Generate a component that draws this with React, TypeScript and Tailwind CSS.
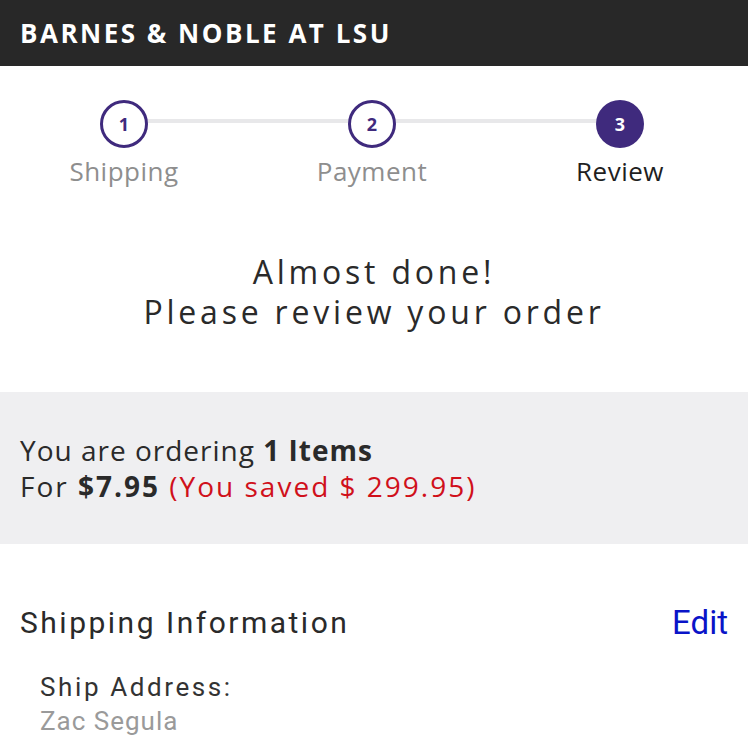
import React from 'react';

const STEPS = [
  { n: 1, label: 'Shipping', active: false },
  { n: 2, label: 'Payment', active: false },
  { n: 3, label: 'Review', active: true },
];

const SANS = { fontFamily: '"Open Sans", Lato, sans-serif' };
const NARROW = { fontFamily: 'Roboto, "Open Sans", sans-serif' };

export default function App() {
  return (
    <div className="w-[748px] h-[740px] overflow-hidden bg-white" style={SANS}>
      {/* Header */}
      <div className="h-[66px] bg-[#282828] flex items-center px-5">
        <span className="text-white text-[26px] font-bold tracking-[2.5px] uppercase">Barnes &amp; Noble at LSU</span>
      </div>

      {/* Stepper */}
      <div className="relative pt-[34px] w-[744px]">
        <div className="absolute left-[124px] right-[124px] top-[53px] h-[4px] bg-[#e8e8ea]" />
        <div className="relative grid grid-cols-3">
          {STEPS.map((s) => (
            <div key={s.n} className="flex flex-col items-center">
              <div
                className={
                  s.active
                    ? 'w-[48px] h-[48px] rounded-full bg-[#3f2a7d] flex items-center justify-center text-white text-[18px] font-bold'
                    : 'w-[48px] h-[48px] rounded-full bg-white border-[3px] border-[#3f2a7d] flex items-center justify-center text-[#3f2a7d] text-[18px] font-bold'
                }
              >
                {s.n}
              </div>
              <div className={s.active ? 'mt-[6px] text-[26px] leading-[34px] tracking-[0.5px] text-[#1f1f1f]' : 'mt-[6px] text-[26px] leading-[34px] tracking-[0.5px] text-[#8e8e8e]'}>
                {s.label}
              </div>
            </div>
          ))}
        </div>
      </div>

      {/* Heading */}
      <div className="pt-[64px] pb-[60px] text-center text-[#2a2a2a] text-[32px] leading-[40px] tracking-[3.8px]">
        <div>Almost done!</div>
        <div>Please review your order</div>
      </div>

      {/* Summary */}
      <div className="h-[152px] bg-[#efeff1] px-5 flex flex-col justify-center text-[28px] leading-[36px] text-[#2a2a2a]">
        <div className="tracking-[1px]">
          You are ordering <span className="font-bold">1 Items</span>
        </div>
        <div className="tracking-[2px]">
          For <span className="font-bold">$7.95</span> <span className="text-[#d0101b]">(You saved $ 299.95)</span>
        </div>
      </div>

      {/* Shipping information */}
      <div className="px-5 pt-[54px]">
        <div className="flex items-center justify-between" style={NARROW}>
          <span className="text-[30px] text-[#2a2a2a] tracking-[2.5px]">Shipping Information</span>
          <span className="text-[33px] text-[#0a14c8]">Edit</span>
        </div>
        <div className="pl-5 pt-[22px]" style={NARROW}>
          <div className="text-[26px] leading-[34px] text-[#333] tracking-[2.6px]">Ship Address:</div>
          <div className="text-[26px] leading-[34px] tracking-[1px] text-[#9a9a9a]">Zac Segula</div>
        </div>
      </div>
    </div>
  );
}
